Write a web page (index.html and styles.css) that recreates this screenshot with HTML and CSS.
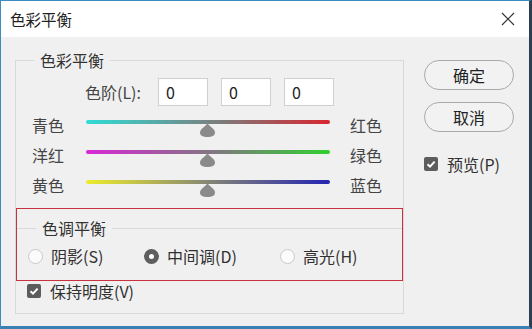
FILE: index.html
```html
<!DOCTYPE html>
<html lang="zh-CN">
<head>
    <meta charset="UTF-8">
    <title>色彩平衡</title>
    <link rel="stylesheet" href="styles.css">
</head>
<body>
    <div class="window">
        <div class="titlebar">
            <span class="title">色彩平衡</span>
            <svg class="close" width="14" height="14" viewBox="0 0 14 14">
                <path d="M1 1 L13 13 M13 1 L1 13" stroke="#333" stroke-width="1.2" fill="none"/>
            </svg>
        </div>
        <div class="content">
            <fieldset class="group">
                <legend>色彩平衡</legend>
                <div class="levels">
                    <span class="levels-label">色阶(L):</span>
                    <input class="num" type="text" value="0">
                    <input class="num" type="text" value="0">
                    <input class="num" type="text" value="0">
                </div>
                <div class="slider-row">
                    <span>青色</span>
                    <div class="track">
                        <div class="bar cyan-red"></div>
                        <svg class="thumb" width="15" height="14" viewBox="0 0 15 14"><path d="M7.5 0 C8.5 3 15 5.5 15 9.5 C15 13 11.5 14 7.5 14 C3.5 14 0 13 0 9.5 C0 5.5 6.5 3 7.5 0Z" fill="#8a8a8a"/></svg>
                    </div>
                    <span class="right">红色</span>
                </div>
                <div class="slider-row">
                    <span>洋红</span>
                    <div class="track">
                        <div class="bar magenta-green"></div>
                        <svg class="thumb" width="15" height="14" viewBox="0 0 15 14"><path d="M7.5 0 C8.5 3 15 5.5 15 9.5 C15 13 11.5 14 7.5 14 C3.5 14 0 13 0 9.5 C0 5.5 6.5 3 7.5 0Z" fill="#8a8a8a"/></svg>
                    </div>
                    <span class="right">绿色</span>
                </div>
                <div class="slider-row">
                    <span>黄色</span>
                    <div class="track">
                        <div class="bar yellow-blue"></div>
                        <svg class="thumb" width="15" height="14" viewBox="0 0 15 14"><path d="M7.5 0 C8.5 3 15 5.5 15 9.5 C15 13 11.5 14 7.5 14 C3.5 14 0 13 0 9.5 C0 5.5 6.5 3 7.5 0Z" fill="#8a8a8a"/></svg>
                    </div>
                    <span class="right">蓝色</span>
                </div>
                <div class="tone-box">
                    <fieldset class="tone">
                        <legend>色调平衡</legend>
                        <div class="radios">
                            <label class="radio shadow"><span class="dot"></span>阴影(S)</label>
                            <label class="radio mid"><span class="dot on"></span>中间调(D)</label>
                            <label class="radio"><span class="dot"></span>高光(H)</label>
                        </div>
                    </fieldset>
                </div>
                <label class="check keep">
                    <span class="box"><svg width="14" height="14" viewBox="0 0 14 14"><path d="M3.5 7.2 L6 9.6 L10.6 4.6" stroke="#fff" stroke-width="2" fill="none"/></svg></span>
                    保持明度(V)
                </label>
            </fieldset>
            <div class="side">
                <button class="btn">确定</button>
                <button class="btn">取消</button>
                <label class="check preview">
                    <span class="box"><svg width="14" height="14" viewBox="0 0 14 14"><path d="M3.5 7.2 L6 9.6 L10.6 4.6" stroke="#fff" stroke-width="2" fill="none"/></svg></span>
                    预览(P)
                </label>
            </div>
        </div>
    </div>
</body>
</html>
```

FILE: styles.css
```css
body {
    margin: 0;
    font-family: "Noto Sans CJK SC", "Noto Sans", sans-serif;
    font-size: 16px;
    color: #303030;
}
.window {
    box-sizing: border-box;
    width: 532px;
    height: 329px;
    border-left: 1px solid #3a8cc2;
    border-top: 1px solid #3a8cc2;
    border-right: 3px solid #2c3e51;
    border-bottom: 3px solid #3a80b2;
    background: #f0f0f0;
    display: flex;
    flex-direction: column;
}
.titlebar {
    height: 36px;
    background: #fff;
    display: flex;
    align-items: center;
    justify-content: space-between;
    padding: 0 14px 0 9px;
}
.title {
    font-size: 15.5px;
    color: #222;
}
.content {
    display: flex;
    align-items: flex-start;
    gap: 20px;
    padding: 13px 0 0 14px;
}
.group {
    box-sizing: border-box;
    width: 389px;
    margin: 0;
    padding: 0 0 12px 0;
    border: 1px solid #d9d9d9;
    min-width: 0;
}
.group legend,
.tone legend {
    font-size: 16px;
    line-height: 20px;
    padding: 0 6px;
    margin-left: 18px;
    color: #333;
}
.levels {
    display: flex;
    align-items: center;
    gap: 13px;
    margin-top: 8px;
    padding-left: 69px;
}
.levels-label {
    width: 60px;
    color: #444;
}
.num {
    box-sizing: border-box;
    width: 50px;
    height: 28px;
    border: 1px solid #cfcfcf;
    background: #fff;
    padding: 0 0 0 7px;
    font-family: "Noto Sans CJK SC", "Noto Sans", sans-serif;
    font-size: 16px;
    color: #222;
    outline: none;
}
.slider-row {
    display: grid;
    grid-template-columns: 54px 244px auto;
    height: 30px;
    line-height: 30px;
    padding-left: 16px;
    color: #444;
}
.levels + .slider-row {
    margin-top: 4px;
}
.slider-row .right {
    margin-left: 20px;
}
.track {
    position: relative;
    height: 30px;
}
.bar {
    margin-top: 10px;
    height: 4px;
    border-radius: 2px;
}
.cyan-red {
    background: linear-gradient(to right, #30dcd6, #7c7c7c 55%, #d8262e);
}
.magenta-green {
    background: linear-gradient(to right, #d828d6, #7c7c7c 55%, #30d030);
}
.yellow-blue {
    background: linear-gradient(to right, #ecec2c, #7c7c7c 55%, #2424b4);
}
.thumb {
    position: absolute;
    left: 114px;
    top: 13px;
}
.tone-box {
    margin-top: 8px;
    border: 1px solid #c9313c;
    padding: 9px 0 12px 0;
}
.tone {
    margin: 0;
    padding: 0;
    border: none;
    border-top: 1px solid #d9d9d9;
    min-width: 0;
}
.tone legend {
    margin-left: 19px;
}
.radios {
    display: flex;
    align-items: center;
    height: 24px;
    margin-top: 6px;
    padding-left: 11px;
}
.radio {
    display: flex;
    align-items: center;
    gap: 8px;
}
.radio.shadow {
    width: 116px;
}
.radio.mid {
    width: 136px;
}
.dot {
    box-sizing: border-box;
    width: 15px;
    height: 15px;
    border-radius: 50%;
    border: 1px solid #c8c8c8;
    background: #fbfbfb;
}
.dot.on {
    border: 5px solid #5e5e5e;
    background: #fff;
}
.check {
    display: flex;
    align-items: center;
    gap: 9px;
    height: 20px;
}
.keep {
    padding-left: 11px;
}
.box {
    width: 14px;
    height: 14px;
    border-radius: 2px;
    background: #5c5c5c;
    display: flex;
}
.side {
    display: flex;
    flex-direction: column;
    gap: 12px;
    margin-top: 10px;
}
.btn {
    box-sizing: border-box;
    width: 90px;
    height: 30px;
    border: 1px solid #a9a9a9;
    border-radius: 15px;
    background: #f2f2f2;
    font-family: "Noto Sans CJK SC", "Noto Sans", sans-serif;
    font-size: 16px;
    color: #222;
    padding: 0;
}
.preview {
    margin-top: 10px;
}
```
